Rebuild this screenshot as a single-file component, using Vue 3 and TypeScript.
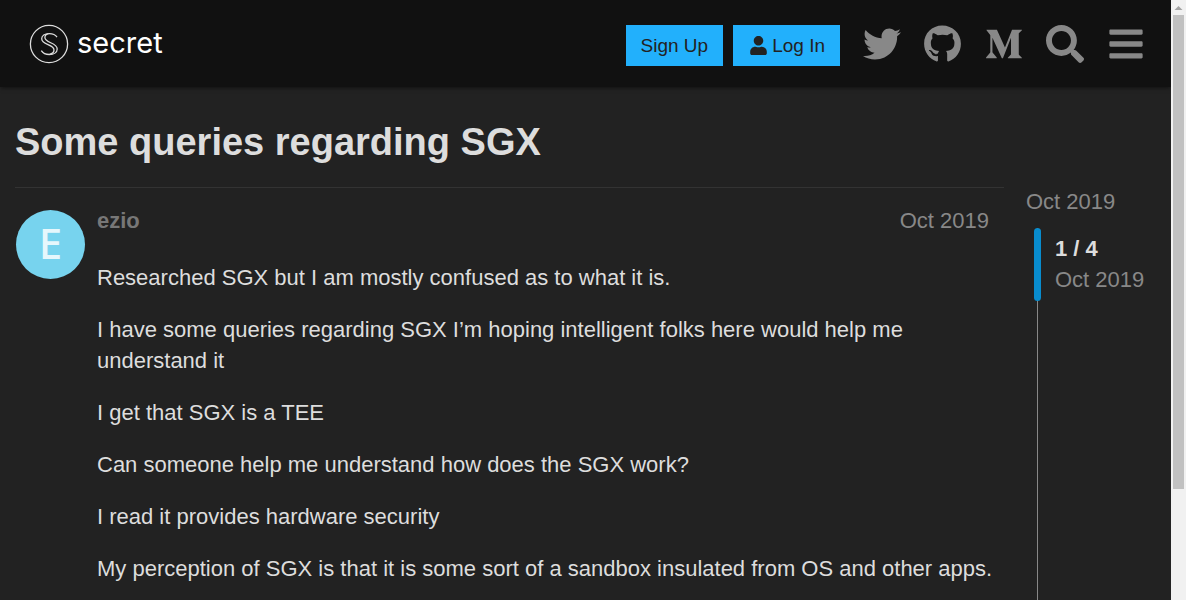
<script setup lang="ts">
interface NavIcon {
  label: string
  viewBox: string
  width: number
  path: string
}

const icons: NavIcon[] = [
  {
    label: 'Twitter',
    viewBox: '0 0 512 512',
    width: 38,
    path: 'M459.37 151.716c.325 4.548.325 9.097.325 13.645 0 138.72-105.583 298.558-298.558 298.558-59.452 0-114.68-17.219-161.137-47.106 8.447.974 16.568 1.299 25.34 1.299 49.055 0 94.213-16.568 130.274-44.832-46.132-.975-84.792-31.188-98.112-72.772 6.498.974 12.995 1.624 19.818 1.624 9.421 0 18.843-1.3 27.614-3.573-48.081-9.747-84.143-51.98-84.143-102.985v-1.299c13.969 7.797 30.214 12.67 47.431 13.319-28.264-18.843-46.781-51.005-46.781-87.391 0-19.492 5.197-37.36 14.294-52.954 51.655 63.675 129.3 105.258 216.365 109.807-1.624-7.797-2.599-15.918-2.599-24.04 0-57.828 46.782-104.934 104.934-104.934 30.213 0 57.502 12.67 76.67 33.137 23.715-4.548 46.456-13.32 66.599-25.34-7.798 24.366-24.366 44.833-46.132 57.827 21.117-2.273 41.584-8.122 60.426-16.243-14.292 20.791-32.161 39.308-52.628 54.253z',
  },
  {
    label: 'GitHub',
    viewBox: '0 0 496 512',
    width: 37,
    path: 'M165.9 397.4c0 2-2.3 3.6-5.2 3.6-3.3.3-5.6-1.3-5.6-3.6 0-2 2.3-3.6 5.2-3.6 3-.3 5.6 1.3 5.6 3.6zM244.8 8C106.1 8 0 113.3 0 252c0 110.9 69.8 205.8 169.5 239.2 12.8 2.3 17.3-5.6 17.3-12.1 0-6.2-.3-40.4-.3-61.4 0 0-70 15-84.7-29.8 0 0-11.4-29.1-27.8-36.6 0 0-22.9-15.7 1.6-15.4 0 0 24.9 2 38.6 25.8 21.9 38.6 58.6 27.5 72.9 20.9 2.3-16 8.8-27.1 16-33.7-55.9-6.2-112.3-14.3-112.3-110.5 0-27.5 7.6-41.3 23.6-58.9-2.6-6.5-11.1-33.3 2.6-67.9 20.9-6.5 69 27 69 27 20-5.6 41.5-8.5 62.8-8.5s42.8 2.9 62.8 8.5c0 0 48.1-33.6 69-27 13.7 34.7 5.2 61.4 2.6 67.9 16 17.7 25.8 31.5 25.8 58.9 0 96.5-58.9 104.2-114.8 110.5 9.2 7.9 17 22.9 17 46.4 0 33.7-.3 75.4-.3 83.6 0 6.5 4.6 14.4 17.3 12.1C428.2 457.8 496 362.9 496 252 496 113.3 383.5 8 244.8 8z',
  },
  {
    label: 'Medium',
    viewBox: '0 0 512 512',
    width: 38,
    path: 'M71.5 142.3c.6-5.9-1.7-11.8-6.1-15.8L20.3 72.1V64h140.2l108.4 237.7L364.2 64h133.7v8.1l-38.6 37c-3.3 2.5-5 6.7-4.3 10.8v272c-.7 4.1 1 8.3 4.3 10.8l37.7 37v8.1H307.3v-8.1l39.1-37.9c3.8-3.8 3.8-5 3.8-10.8V171.2L241.5 447.1h-14.7L100.4 171.2v184.9c-1.1 7.8 1.5 15.6 7 21.2l50.8 61.6v8.1h-144v-8L65 377.3c5.4-5.6 7.9-13.5 6.5-21.2V142.3z',
  },
  {
    label: 'Search',
    viewBox: '0 0 512 512',
    width: 38,
    path: 'M505 442.7L405.3 343c-4.5-4.5-10.6-7-17-7H372c27.6-35.3 44-79.7 44-128C416 93.1 322.9 0 208 0S0 93.1 0 208s93.1 208 208 208c48.3 0 92.7-16.4 128-44v16.3c0 6.4 2.5 12.5 7 17l99.7 99.7c9.4 9.4 24.6 9.4 33.9 0l28.3-28.3c9.4-9.4 9.4-24.6.1-34zM208 336c-70.7 0-128-57.2-128-128 0-70.7 57.2-128 128-128 70.7 0 128 57.2 128 128 0 70.7-57.2 128-128 128z',
  },
  {
    label: 'Menu',
    viewBox: '0 0 448 512',
    width: 34,
    path: 'M16 132h416c8.837 0 16-7.163 16-16V76c0-8.837-7.163-16-16-16H16C7.163 60 0 67.163 0 76v40c0 8.837 7.163 16 16 16zm0 160h416c8.837 0 16-7.163 16-16v-40c0-8.837-7.163-16-16-16H16c-8.837 0-16 7.163-16 16v40c0 8.837 7.163 16 16 16zm0 160h416c8.837 0 16-7.163 16-16v-40c0-8.837-7.163-16-16-16H16c-8.837 0-16 7.163-16 16v40c0 8.837 7.163 16 16 16z',
  },
]

const links = icons.slice(0, 3)
const actions = icons.slice(3)

const paragraphs: string[] = [
  'Researched SGX but I am mostly confused as to what it is.',
  'I have some queries regarding SGX I’m hoping intelligent folks here would help me understand it',
  'I get that SGX is a TEE',
  'Can someone help me understand how does the SGX work?',
  'I read it provides hardware security',
  'My perception of SGX is that it is some sort of a sandbox insulated from OS and other apps.',
]
</script>

<template>
  <div class="window">
    <div class="page">
      <header class="header">
        <a class="brand" href="#">
          <svg class="brand-mark" width="40" height="40" viewBox="0 0 40 40" aria-hidden="true">
            <circle cx="20" cy="20" r="18.6" />
            <path d="M28 13.2C26.5 10.8 23.6 9.6 20.2 9.6C15.7 9.6 12.7 11.7 12.7 14.8C12.7 21.2 25 20 25 26C25 28.3 23.4 29.7 20.6 30.3" />
            <path d="M19.4 9.7C16.8 10.3 15.9 11.6 15.9 13.6C15.9 19.2 28.2 18.4 28.2 24.9C28.2 28.4 24.8 30.5 20.4 30.5C16.8 30.5 13.9 29.2 12.3 26.6" />
          </svg>
          <span class="brand-name">secret</span>
        </a>
        <div class="auth">
          <button type="button" class="btn">Sign Up</button>
          <button type="button" class="btn btn-login">
            <svg width="17" height="19" viewBox="0 0 448 512" aria-hidden="true">
              <path d="M224 256c70.700 0 128-57.300 128-128S294.700 0 224 0 96 57.300 96 128s57.300 128 128 128zm89.600 32h-16.700c-22.200 10.200-46.900 16-72.900 16s-50.600-5.800-72.900-16h-16.700C60.200 288 0 348.200 0 422.400V464c0 26.500 21.500 48 48 48h352c26.500 0 48-21.500 48-48v-41.600c0-74.200-60.200-134.400-134.400-134.400z" />
            </svg>
            Log In
          </button>
        </div>
        <nav class="icons">
          <a v-for="i in links" :key="i.label" class="icon" href="#" :aria-label="i.label">
            <svg :width="i.width" height="38" :viewBox="i.viewBox"><path :d="i.path" /></svg>
          </a>
          <button v-for="i in actions" :key="i.label" class="icon" type="button" :aria-label="i.label">
            <svg :width="i.width" height="38" :viewBox="i.viewBox"><path :d="i.path" /></svg>
          </button>
        </nav>
      </header>

      <main class="topic">
        <h1 class="title">Some queries regarding SGX</h1>
        <div class="columns">
          <article class="post">
            <div class="avatar" aria-hidden="true">E</div>
            <div class="post-main">
              <div class="meta">
                <a class="author" href="#">ezio</a>
                <a class="date" href="#">Oct 2019</a>
              </div>
              <div class="body">
                <p v-for="p in paragraphs" :key="p">{{ p }}</p>
              </div>
            </div>
          </article>
          <aside class="timeline">
            <a class="start" href="#">Oct 2019</a>
            <div class="track">
              <div class="handle"></div>
              <div class="position">
                <strong>1 / 4</strong>
                <span>Oct 2019</span>
              </div>
            </div>
          </aside>
        </div>
      </main>
    </div>
    <div class="scrollbar" aria-hidden="true">
      <svg width="15" height="15" viewBox="0 0 15 15"><path d="M3.500 10L7.500 6L11.500 10Z" /></svg>
      <div class="thumb"></div>
    </div>
  </div>
</template>

<style>
body {
  background: #222;
}
</style>

<style scoped>
.window {
  display: grid;
  grid-template-columns: minmax(0, 1fr) 15px;
  height: 100vh;
  overflow: hidden;
  background: #222;
  color: #ddd;
  font: 22px/31px "Liberation Sans", Arial, sans-serif;
}
a {
  color: inherit;
  text-decoration: none;
}
button {
  border: 0;
  margin: 0;
  font: inherit;
  cursor: pointer;
}
.page {
  display: flex;
  flex-direction: column;
  min-height: 0;
  overflow: hidden;
}
.header {
  display: flex;
  align-items: center;
  flex: none;
  height: 87px;
  box-sizing: border-box;
  padding: 0 15px 0 29px;
  background: #111;
  box-shadow: 0 2px 4px -1px rgba(0, 0, 0, 0.5);
}
.brand {
  display: flex;
  align-items: center;
  gap: 8px;
  margin-right: auto;
}
.brand-mark {
  fill: none;
  stroke: #ddd;
  stroke-width: 1.3;
}
.brand-name {
  padding-bottom: 2px;
  color: #fff;
  font: 400 29px/38px Inter, sans-serif;
}
.auth {
  display: flex;
  gap: 10px;
  margin: 4px 11px 0 0;
}
.btn {
  display: flex;
  align-items: center;
  gap: 5px;
  height: 41px;
  padding: 0 15px;
  background: #22b0fc;
  color: #222;
  font-size: 19px;
}
.btn-login {
  padding-left: 17px;
}
.btn svg {
  fill: #222;
}
.icons {
  display: flex;
}
.icon {
  display: flex;
  align-items: center;
  justify-content: center;
  width: 61px;
  height: 61px;
  padding: 0;
  background: none;
}
.icon svg {
  fill: #888;
}
.topic {
  flex: 1;
  display: flex;
  flex-direction: column;
  min-height: 0;
  padding: 32px 15px 0;
}
.title {
  margin: 0;
  font-size: 38px;
  line-height: 46px;
}
.columns {
  flex: 1;
  display: grid;
  grid-template-columns: minmax(0, 1fr) 130px;
  gap: 22px;
  min-height: 0;
  padding-top: 22px;
}
.post {
  display: flex;
  align-items: flex-start;
  gap: 12px;
  padding: 17px 0 0 1px;
  border-top: 1px solid #333;
}
.avatar {
  flex: none;
  width: 69px;
  height: 69px;
  margin-top: 5px;
  border-radius: 50%;
  background: #77d3ee;
  color: #e6f7fc;
  font: 500 42px/66px "Noto Sans", sans-serif;
  text-align: center;
}
.post-main {
  flex: 1;
  min-width: 0;
}
.meta {
  display: flex;
  justify-content: space-between;
  padding-right: 15px;
  color: #888;
}
.author {
  font-weight: bold;
  color: #777;
}
.body {
  padding-top: 26px;
}
.body p {
  margin: 0 0 21px;
}
.timeline {
  display: flex;
  flex-direction: column;
  min-height: 0;
  color: #888;
}
.start {
  line-height: 29px;
  margin-bottom: 12px;
}
.track {
  flex: 1;
  display: flex;
  gap: 14px;
  margin-left: 11px;
  border-left: 1px solid #888;
}
.handle {
  flex: none;
  width: 7px;
  height: 73px;
  margin-left: -4px;
  border-radius: 4px;
  background: #088cce;
}
.position {
  display: flex;
  flex-direction: column;
  padding-top: 5px;
}
.position strong {
  color: #ddd;
}
.scrollbar {
  display: flex;
  flex-direction: column;
  background: #f1f1f1;
}
.scrollbar svg {
  flex: none;
  fill: #a3a3a3;
}
.thumb {
  height: 79%;
  margin: 0 2px;
  background: #c1c1c1;
}
</style>
